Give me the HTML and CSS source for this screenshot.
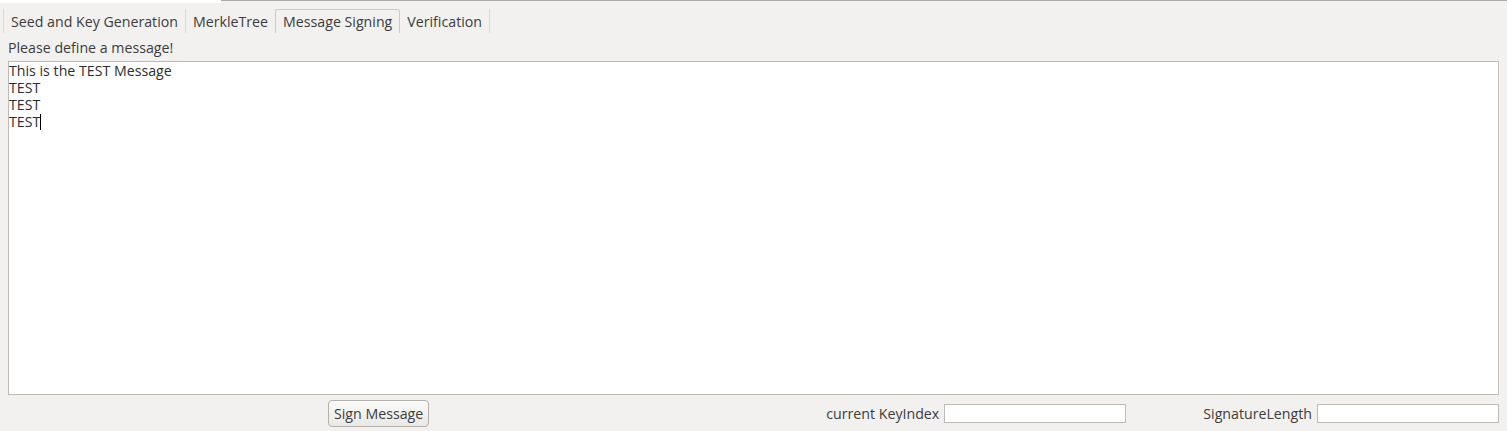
FILE: index.html
```html
<!DOCTYPE html>
<html>
<head>
<meta charset="utf-8">
<link rel="stylesheet" href="styles.css">
</head>
<body>
<div class="topstrip"><div class="ts-white"></div><div class="ts-line"></div></div>
<div class="tabbar">
  <div class="tab first">Seed and Key Generation</div>
  <div class="tab">MerkleTree</div>
  <div class="tab active">Message Signing</div>
  <div class="tab">Verification</div>
</div>
<div class="panel">
  <div class="label">Please define a message!</div>
  <div class="editor">This is the TEST Message
TEST
TEST
TEST<span class="caret"></span></div>
  <div class="bottom">
    <button class="btn">Sign Message</button>
    <div class="field f1"><span class="flabel">current KeyIndex</span><span class="input"></span></div>
    <div class="field f2"><span class="flabel">SignatureLength</span><span class="input"></span></div>
  </div>
</div>
</body>
</html>
```
FILE: styles.css
```css
html, body {
  margin: 0;
  padding: 0;
  background: #f2f1f0;
  width: 1507px;
  height: 431px;
  overflow: hidden;
  font-family: "Open Sans", "DejaVu Sans", sans-serif;
  font-size: 14.2px;
  color: #3c3c3c;
}
.topstrip {
  display: flex;
  height: 3px;
}
.ts-white {
  width: 221px;
  background: #ffffff;
}
.ts-line {
  flex: 1;
  border-top: 1px solid #acaaa7;
}
.tabbar {
  display: flex;
  height: 30px;
  padding-left: 3px;
  align-items: flex-end;
}
.tab {
  height: 24px;
  padding: 2px 7px 0 7px;
  line-height: 22px;
  border-right: 1px solid #dcd9d6;
  box-sizing: border-box;
  white-space: nowrap;
}
.tab.first {
  border-left: 1px solid #dcd9d6;
}
.tab.active {
  margin-left: -1px;
  padding: 1px 7px 0 7px;
  border: 1px solid #cdcac6;
  border-bottom: none;
  border-radius: 3px 3px 0 0;
  background: #f2f1f0;
}
.panel {
  padding: 0 8px;
}
.label {
  height: 28px;
  box-sizing: border-box;
  padding-top: 2px;
  line-height: 26px;
}
.editor {
  height: 334px;
  box-sizing: border-box;
  background: #ffffff;
  border: 1px solid #bebab6;
  border-right-color: #c6c3bf;
  white-space: pre;
  line-height: 17px;
  color: #2e2e2e;
}
.caret {
  display: inline-block;
  width: 1px;
  height: 16px;
  background: #000;
  vertical-align: -3px;
}
.bottom {
  display: flex;
  align-items: center;
  height: 36px;
  padding-top: 1px;
  box-sizing: border-box;
}
.btn {
  margin-left: 320px;
  height: 27px;
  padding: 0 5px;
  font-family: inherit;
  font-size: 14.2px;
  color: #3c3c3c;
  border: 1px solid #b3afab;
  border-radius: 4px;
  background: linear-gradient(#fbfbfa, #e9e8e6);
  white-space: nowrap;
}
.field {
  display: flex;
  align-items: center;
  gap: 5px;
}
.f1 {
  margin-left: auto;
  margin-right: 77px;
}
.input {
  display: block;
  width: 182px;
  height: 19px;
  box-sizing: border-box;
  background: #ffffff;
  border: 1px solid #bebab6;
}
```
